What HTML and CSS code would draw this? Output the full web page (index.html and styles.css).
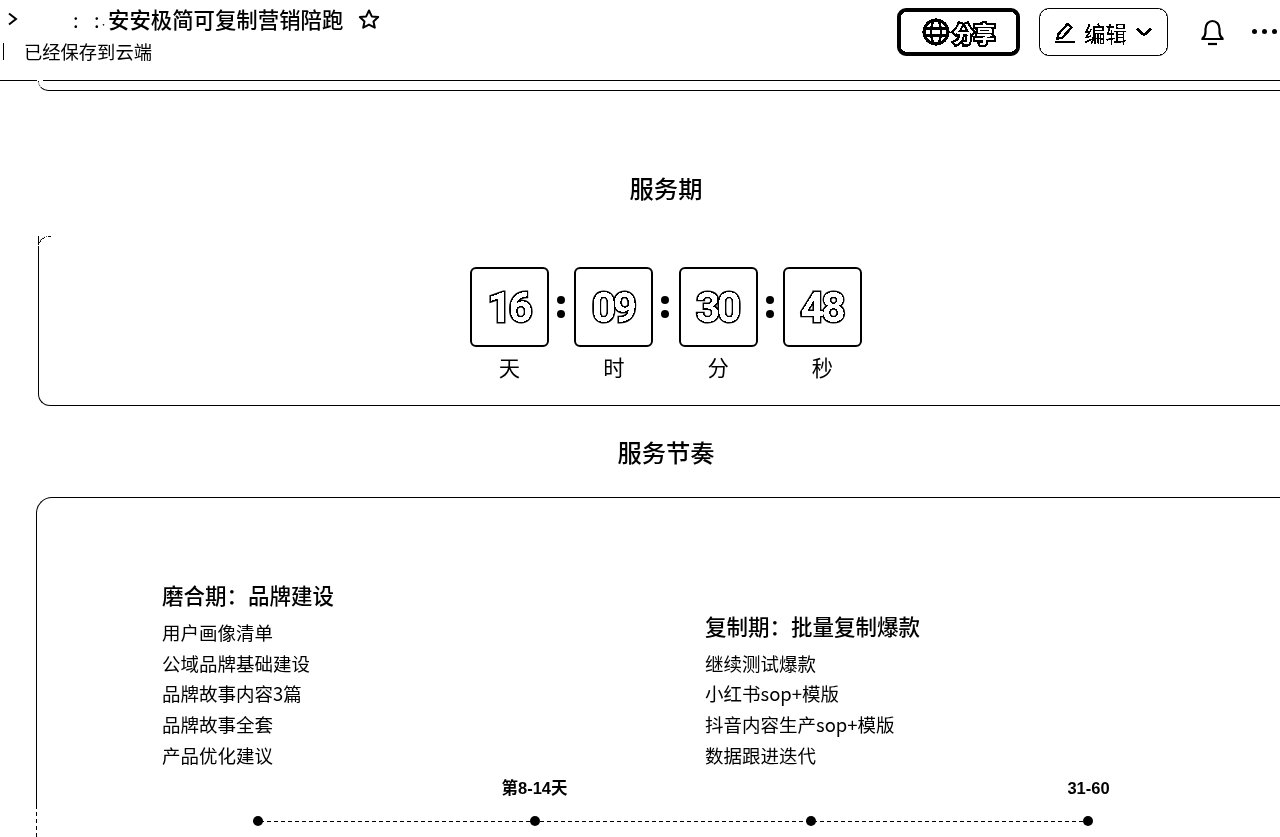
FILE: index.html
```html
<!DOCTYPE html>
<html lang="zh-CN">

<head>
    <meta charset="UTF-8">
    <meta name="viewport" content="width=device-width, initial-scale=1.0">
    <title>安安极简可复制营销陪跑</title>
    <link rel="stylesheet" href="styles.css">
</head>

<body>
    <header class="topbar">
        <div class="doc-info">
            <div class="doc-title-row">
                <svg class="chevron-right" width="12" height="14" viewBox="0 0 12 14">
                    <path d="M2 1.5 L9 7 L2 12.5" fill="none" stroke="#000" stroke-width="2" />
                </svg>
                <span class="title-mask">: :<span class="mask-dot">·</span></span>
                <span class="doc-title">安安极简可复制营销陪跑</span>
                <svg class="star" width="22" height="20" viewBox="0 0 22 20">
                    <path d="M11 1.5 L13.8 7.4 L20.2 8.1 L15.5 12.5 L16.8 18.7 L11 15.6 L5.2 18.7 L6.5 12.5 L1.8 8.1 L8.2 7.4 Z" fill="none" stroke="#000" stroke-width="2" stroke-linejoin="round" />
                </svg>
            </div>
            <div class="doc-status">
                <span class="status-bar"></span>
                <span>已经保存到云端</span>
            </div>
        </div>
        <div class="actions">
            <button class="btn-share">
                <svg width="28" height="28" viewBox="0 0 28 28" fill="none" stroke="#000" stroke-width="3">
                    <circle cx="14" cy="14" r="12" />
                    <ellipse cx="14" cy="14" rx="5" ry="12" stroke-width="2" />
                    <path d="M2 10.5 H26 M2 17.5 H26" stroke-width="2" />
                </svg>
                <span>分享</span>
            </button>
            <button class="btn-edit">
                <svg width="22" height="24" viewBox="0 0 22 24" fill="none" stroke="#000" stroke-width="2.2">
                    <path d="M4 14.5 L13.5 4 L17.5 7.5 L8 18 L3.5 18.5 Z" />
                    <path d="M1 22 H21" stroke-width="2.4" />
                </svg>
                <span>编辑</span>
                <svg width="18" height="12" viewBox="0 0 18 12" fill="none" stroke="#000" stroke-width="2.4">
                    <path d="M2 2.5 L9 9 L16 2.5" />
                </svg>
            </button>
            <svg class="bell" width="27" height="28" viewBox="0 0 27 28" fill="none" stroke="#000" stroke-width="2.2">
                <path d="M3.5 21 L3.5 20.5 C5.5 19 6.5 17 6.5 14 L6.5 11 C6.5 6.5 9.5 3 13.5 3 C17.5 3 20.5 6.5 20.5 11 L20.5 14 C20.5 17 21.5 19 23.5 20.5 L23.5 21 Z" />
                <path d="M9 26 H18" />
            </svg>
            <div class="more">
                <i></i><i></i><i></i>
            </div>
        </div>
    </header>

    <main class="page">
        <div class="stub-card"></div>

        <h2 class="section-title title-period">服务期</h2>
        <section class="card card-period">
            <div class="countdown">
                <div class="cell"><div class="digits">16</div><div class="unit">天</div></div>
                <div class="colon"></div>
                <div class="cell"><div class="digits">09</div><div class="unit">时</div></div>
                <div class="colon"></div>
                <div class="cell"><div class="digits">30</div><div class="unit">分</div></div>
                <div class="colon"></div>
                <div class="cell"><div class="digits">48</div><div class="unit">秒</div></div>
            </div>
        </section>

        <h2 class="section-title title-rhythm">服务节奏</h2>
        <section class="card card-rhythm">
            <div class="phases">
                <div class="phase">
                    <h3>磨合期：品牌建设</h3>
                    <ul>
                        <li>用户画像清单</li>
                        <li>公域品牌基础建设</li>
                        <li>品牌故事内容3篇</li>
                        <li>品牌故事全套</li>
                        <li>产品优化建议</li>
                    </ul>
                </div>
                <div class="phase">
                    <h3>复制期：批量复制爆款</h3>
                    <ul>
                        <li>继续测试爆款</li>
                        <li>小红书sop+模版</li>
                        <li>抖音内容生产sop+模版</li>
                        <li>数据跟进迭代</li>
                    </ul>
                </div>
            </div>
            <div class="timeline-labels">
                <span></span>
                <span>第8-14天</span>
                <span></span>
                <span>31-60</span>
            </div>
            <div class="timeline">
                <i></i><i></i><i></i><i></i>
            </div>
        </section>
    </main>
</body>

</html>
```

FILE: styles.css
```css
* {
    box-sizing: border-box;
}

html,
body {
    height: 837px;
    overflow: hidden;
}

body {
    margin: 0;
    background-color: #fff;
    color: #000;
    font-family: "Noto Sans CJK SC", "Liberation Sans", sans-serif;
    filter: grayscale(1) brightness(0.8) contrast(60);
}

/* top bar */
.topbar {
    height: 81px;
    border-bottom: 1px solid #000;
    display: flex;
    justify-content: space-between;
}

.doc-title-row {
    display: flex;
    align-items: center;
    height: 30px;
    margin-top: 4px;
    padding-left: 7px;
}

.title-mask {
    font-size: 20px;
    width: 89px;
    padding-left: 54px;
    white-space: nowrap;
    word-spacing: 11px;
}

.mask-dot {
    font-size: 8px;
}

.doc-title {
    font-size: 21.4px;
    font-weight: 500;
    line-height: 30px;
}

.star {
    margin-left: 15px;
}

.doc-status {
    display: flex;
    align-items: center;
    height: 24px;
    margin-top: 5px;
    padding-left: 3px;
    font-size: 18.3px;
}

.status-bar {
    width: 1px;
    height: 17px;
    background-color: #000;
    margin-right: 20px;
}

.actions {
    display: flex;
    align-items: flex-start;
    padding-top: 8px;
    padding-right: 3px;
}

button {
    font-family: inherit;
    background-color: #fff;
    color: #000;
    padding: 0;
    display: flex;
    align-items: center;
    justify-content: center;
    height: 48px;
}

.btn-share {
    width: 123px;
    border: 4px solid #000;
    border-radius: 9px;
    gap: 3px;
}

.btn-share span {
    font-size: 21.3px;
    font-weight: 700;
    color: #fff;
    -webkit-text-stroke: 4px #000;
    paint-order: stroke fill;
}

.btn-edit {
    width: 129px;
    margin-left: 19px;
    border: 1px solid #000;
    border-radius: 10px;
    font-size: 21.3px;
    gap: 8px;
}

.bell {
    margin-left: 31px;
    margin-top: 10px;
}

.more {
    display: flex;
    gap: 5px;
    margin-left: 26px;
    margin-top: 21px;
}

.more i {
    width: 5px;
    height: 5px;
    background-color: #000;
    border-radius: 50%;
}

/* page body */
.page {
    padding-left: 36px;
}

.stub-card {
    position: relative;
    height: 10px;
    margin-left: 2px;
    border-left: 1px dotted #000;
    border-bottom: 1px solid #000;
    border-bottom-left-radius: 10px;
}

.stub-card::before {
    content: "";
    position: absolute;
    left: -2px;
    top: -1px;
    width: 6px;
    height: 1px;
    background-color: #fff;
}

.section-title {
    margin: 0;
    font-size: 24.3px;
    font-weight: 500;
    line-height: 36px;
    text-align: center;
    width: 1260px;
}

.title-period {
    margin-top: 79px;
}

.card {
    position: relative;
    margin-right: -20px;
    border-left: 1px solid #000;
    border-bottom: 1px solid #000;
}

.card-period {
    height: 170px;
    margin-left: 2px;
    margin-top: 30px;
    border-radius: 0 0 0 12px;
    padding-top: 31px;
}

.card-period::before {
    content: "";
    position: absolute;
    left: -1px;
    top: 0;
    width: 12px;
    height: 10px;
    background-color: #fff;
    border-left: 1px dotted #000;
    border-top: 1px dotted #000;
    border-top-left-radius: 12px;
}

.countdown {
    display: flex;
    padding-left: 431px;
}

.cell {
    width: 79px;
    display: flex;
    flex-direction: column;
    align-items: center;
}

.digits {
    width: 79px;
    height: 80px;
    border: 2px solid #000;
    border-radius: 6px;
    display: flex;
    align-items: center;
    justify-content: center;
    padding-right: 2px;
    font-family: Roboto, "Liberation Sans", sans-serif;
    font-size: 42px;
    font-weight: 700;
    letter-spacing: -3px;
    color: #fff;
    -webkit-text-stroke: 3px #000;
    paint-order: stroke fill;
}

.unit {
    font-size: 21.3px;
    line-height: 30px;
    margin-top: 5px;
}

.colon {
    width: 25.3px;
    height: 80px;
    position: relative;
}

.colon::before,
.colon::after {
    content: "";
    position: absolute;
    left: 8px;
    width: 8px;
    height: 8px;
    background-color: #000;
    border-radius: 50%;
}

.colon::before {
    top: 29px;
}

.colon::after {
    top: 43px;
}

.title-rhythm {
    margin-top: 28px;
}

.card-rhythm {
    margin-top: 27px;
    height: 340px;
    border-top: 1px solid #000;
    border-bottom: none;
    border-radius: 16px 0 0 0;
    padding: 0 0 0 125px;
}

/* left edge breaks up into dashes near the bottom */
.card-rhythm::after {
    content: "";
    position: absolute;
    left: -1px;
    top: 311px;
    bottom: 0;
    width: 1px;
    background-image: repeating-linear-gradient(180deg, #fff 0 3px, #000 3px 7px);
}

.phases {
    display: flex;
    align-items: flex-end;
    height: 272.5px;
}

.phase {
    width: 543px;
}

.phase h3 {
    margin: 0 0 7px;
    font-size: 21.5px;
    font-weight: 500;
    line-height: 31px;
}

.phase ul {
    list-style: none;
    margin: 0;
    padding: 0;
    font-size: 18.5px;
    line-height: 30.7px;
}

.timeline-labels {
    display: grid;
    grid-template-columns: repeat(4, 277px);
    width: 1108px;
    margin-top: 5.5px;
    margin-left: -43px;
    font-family: "Liberation Sans", "Noto Sans CJK SC", sans-serif;
    font-size: 16.5px;
    font-weight: 700;
    line-height: 24px;
    text-align: center;
}

.timeline {
    position: relative;
    display: flex;
    justify-content: space-between;
    width: 840px;
    margin-top: 16px;
    margin-left: 91px;
    background-image: repeating-linear-gradient(90deg, #000 0 4px, transparent 4px 7px);
    background-size: 100% 1px;
    background-repeat: no-repeat;
    background-position: 0 5px;
}

.timeline i {
    width: 10px;
    height: 10px;
    border-radius: 50%;
    background-color: #000;
}
```
